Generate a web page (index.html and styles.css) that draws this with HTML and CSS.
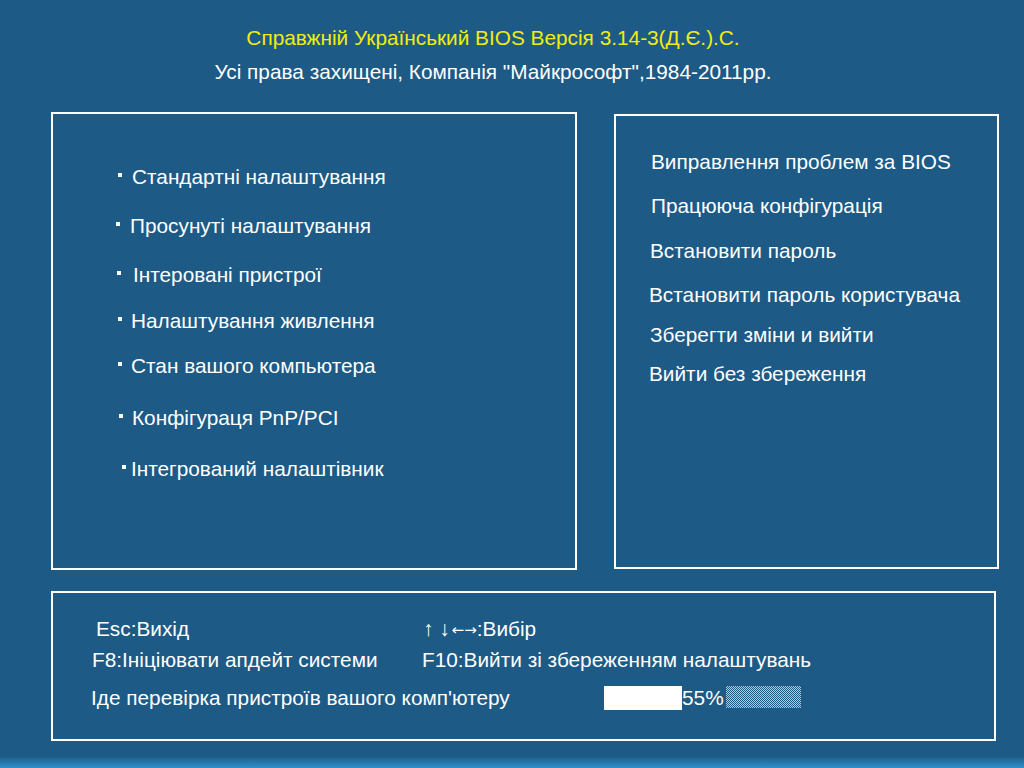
FILE: index.html
```html
<!DOCTYPE html>
<html lang="uk">
<head>
<meta charset="utf-8">
<title>BIOS</title>
<link rel="stylesheet" href="styles.css">
</head>
<body>
<div class="screen">
  <header class="head">
    <div class="title">Справжній Український BIOS Версія 3.14-3(Д.Є.).С.</div>
    <div class="copy">Усі права захищені, Компанія "Майкрософт",1984-2011рр.</div>
  </header>
  <div class="panels">
    <section class="box left">
      <div class="item i1"><span class="dot"></span>Стандартні налаштування</div>
      <div class="item i2"><span class="dot"></span>Просунуті налаштування</div>
      <div class="item i3"><span class="dot"></span>Інтеровані пристрої</div>
      <div class="item i4"><span class="dot"></span>Налаштування живлення</div>
      <div class="item i5"><span class="dot"></span>Стан вашого компьютера</div>
      <div class="item i6"><span class="dot"></span>Конфігураця PnP/PCI</div>
      <div class="item i7"><span class="dot"></span>Інтегрований налаштівник</div>
    </section>
    <section class="box right">
      <div class="ritem r1">Виправлення проблем за BIOS</div>
      <div class="ritem r2">Працююча конфігурація</div>
      <div class="ritem r3">Встановити пароль</div>
      <div class="ritem r4">Встановити пароль користувача</div>
      <div class="ritem r5">Зберегти зміни и вийти</div>
      <div class="ritem r6">Вийти без збереження</div>
    </section>
  </div>
  <section class="box bottom">
    <div class="keys">
      <div class="k k1">Esc:Вихід</div>
      <div class="k k2"><span class="arr">↑</span> <span class="arr">↓</span><span class="harr">←→</span>:Вибір</div>
      <div class="k k3">F8:Ініціювати апдейт системи</div>
      <div class="k k4">F10:Вийти зі збереженням налаштувань</div>
    </div>
    <div class="status">
      <div class="check">Іде перевірка пристроїв вашого комп'ютеру</div>
      <div class="progress">
        <div class="fill"></div>
        <div class="pct">55%</div>
        <div class="rest"></div>
      </div>
    </div>
  </section>
</div>
</body>
</html>
```

FILE: styles.css
```css
html, body {
  margin: 0;
  padding: 0;
  width: 1024px;
  height: 768px;
  overflow: hidden;
}
body {
  background: linear-gradient(to bottom, #1d5a85 0, #1d5a85 756px, #2e91cb 768px);
  color: #ffffff;
  font-family: "Liberation Sans", Arial, sans-serif;
  font-size: 20.8px;
}
.screen {
  display: flex;
  flex-direction: column;
  padding-left: 51px;
}
.head {
  display: flex;
  flex-direction: column;
  align-items: center;
  width: 882px;
  padding-top: 26px;
  margin-left: 1px;
}
.title {
  color: #f2ec12;
  line-height: 24px;
  height: 24px;
}
.copy {
  margin-top: 10px;
  line-height: 24px;
  height: 24px;
}
.panels {
  display: flex;
  margin-top: 28px;
}
.box {
  border: 2px solid #ffffff;
  box-sizing: border-box;
}
.left {
  width: 526px;
  height: 458px;
  padding-top: 51px;
  padding-left: 65px;
  display: flex;
  flex-direction: column;
}
.item {
  display: flex;
  align-items: center;
  line-height: 24px;
  height: 24px;
}
.dot {
  width: 4px;
  height: 4px;
  background: #ffffff;
  margin-right: 10px;
  margin-top: -5px;
}
.i2 { margin-top: 25px; margin-left: -2px; }
.i3 { margin-top: 25px; margin-left: -1px; }
.i3 .dot { margin-right: 12px; }
.i4 { margin-top: 22px; }
.i4 .dot { margin-right: 9px; }
.i5 { margin-top: 21px; }
.i5 .dot { margin-right: 9px; }
.i6 { margin-top: 28px; margin-left: 1px; }
.i6 .dot { margin-right: 9px; }
.i7 { margin-top: 27px; margin-left: 4px; }
.i7 .dot { margin-right: 5px; }
.right {
  width: 385px;
  height: 455px;
  margin-left: 37px;
  margin-top: 2px;
  padding-top: 34px;
  padding-left: 35px;
  display: flex;
  flex-direction: column;
}
.ritem {
  line-height: 24px;
  height: 24px;
}
.r2 { margin-top: 20px; }
.r3 { margin-top: 21px; margin-left: -1px; }
.r4 { margin-top: 20px; margin-left: -2px; }
.r5 { margin-top: 16px; margin-left: -1px; }
.r6 { margin-top: 15px; margin-left: -2px; }
.bottom {
  width: 945px;
  height: 150px;
  margin-top: 21px;
  padding-top: 24px;
  padding-left: 40px;
  display: flex;
  flex-direction: column;
}
.keys {
  display: grid;
  grid-template-columns: 330px auto;
  row-gap: 7px;
}
.k {
  line-height: 24px;
  height: 24px;
}
.k1 { margin-left: 3px; }
.k3 { margin-left: -1px; }
.k4 { margin-left: -1px; }
.harr {
  font-family: "DejaVu Sans", sans-serif;
  font-size: 15px;
  margin-left: 2px;
  vertical-align: 1px;
}
.status {
  display: flex;
  align-items: center;
  margin-top: 14px;
}
.check {
  width: 513px;
  line-height: 24px;
  margin-left: -2px;
}
.progress {
  display: flex;
  align-items: center;
  height: 24px;
}
.fill {
  width: 78px;
  height: 24px;
  background: #ffffff;
}
.pct {
  line-height: 24px;
  width: 44px;
}
.rest {
  width: 75px;
  height: 22px;
  margin-top: -2px;
  background-image: repeating-conic-gradient(#b3cadc 0 25%, transparent 0 50%);
  background-size: 2px 2px;
}
```
